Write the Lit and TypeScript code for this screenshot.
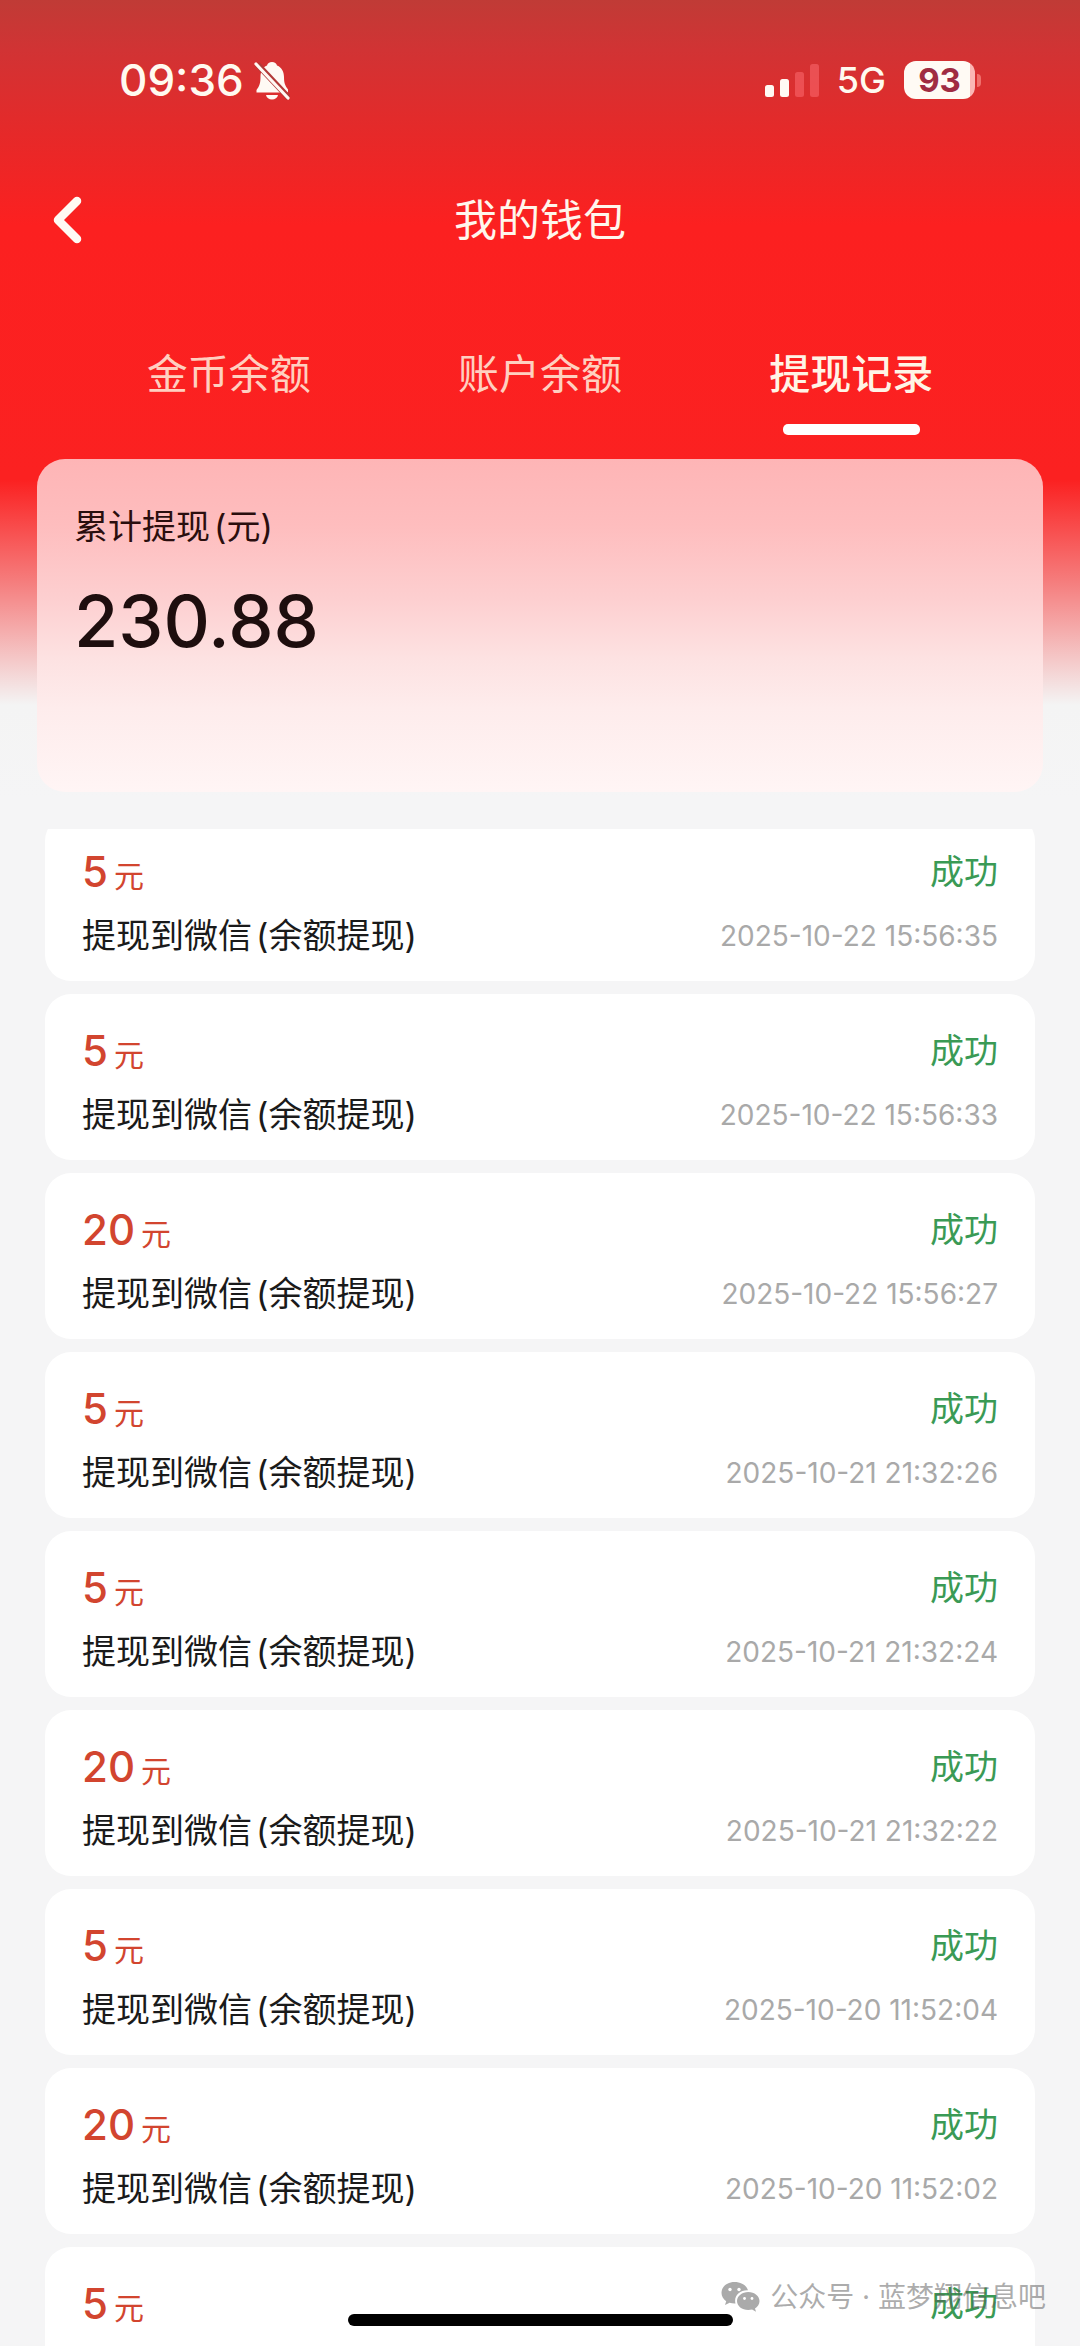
import { LitElement, html, css, svg, nothing } from "lit";
import { customElement, property, query, state } from "lit/decorators.js";
import { classMap } from "lit/directives/class-map.js";

interface Withdrawal {
  amount: number;
  time?: string;
}

const RECORDS: Withdrawal[] = [
  { amount: 5, time: "2025-10-22 15:56:35" },
  { amount: 5, time: "2025-10-22 15:56:33" },
  { amount: 20, time: "2025-10-22 15:56:27" },
  { amount: 5, time: "2025-10-21 21:32:26" },
  { amount: 5, time: "2025-10-21 21:32:24" },
  { amount: 20, time: "2025-10-21 21:32:22" },
  { amount: 5, time: "2025-10-20 11:52:04" },
  { amount: 20, time: "2025-10-20 11:52:02" },
  { amount: 5 },
];

const TABS = ["金币余额", "账户余额", "提现记录"];

@customElement("status-bar")
export class StatusBar extends LitElement {
  static styles = css`
    :host {
      display: flex;
      align-items: center;
      justify-content: space-between;
      height: 160px;
      padding: 0 99px 0 119px;
      color: #fffaf0;
    }
    .side {
      display: flex;
      align-items: center;
    }
    .clock {
      font-size: 44px;
      font-weight: 500;
      line-height: 52px;
    }
    .bell {
      margin-left: 10px;
      width: 36px;
      height: 40px;
    }
    .signal {
      width: 54px;
      height: 34px;
    }
    .network {
      margin: 0 18px;
      font-size: 36px;
      font-weight: 500;
      line-height: 44px;
    }
    .battery {
      display: flex;
      align-items: center;
      gap: 2px;
    }
    .cell {
      display: flex;
      align-items: center;
      justify-content: center;
      width: 71px;
      height: 38px;
      border-radius: 12px;
      background: linear-gradient(90deg, #fffaf4 93%, #fbb6b4 93%);
      color: #a02c42;
      font-size: 33px;
      font-weight: 700;
      line-height: 38px;
    }
    .nub {
      width: 4px;
      height: 13px;
      border-radius: 0 4px 4px 0;
      background: #f0706c;
    }
  `;

  render() {
    return html`
      <div class="side">
        <span class="clock">09:36</span>
        <svg class="bell" viewBox="0 0 36 40" aria-hidden="true">
          <path
            fill="#fffaf4"
            d="M18 2c2.600 0 4.500 1.400 5 3.500C28 7.500 30 12 30 17c0 6 1 8.500 4 12.500V32.500H2.500V30C5.500 26 6.500 23 6.500 17c0-5.500 2-9.500 6.500-11.500C13.500 3.400 15.400 2 18 2z"
          />
          <path fill="#fffaf4" d="M12 35h12c-.500 2.800-3 4.500-6 4.500S12.500 37.800 12 35z" />
          <path stroke="#b23a38" stroke-width="6" d="M3 4l32 34" />
          <path stroke="#fffaf4" stroke-width="3.200" stroke-linecap="round" d="M2 4l32 34" />
        </svg>
      </div>
      <div class="side">
        <svg class="signal" viewBox="0 0 54 34" aria-hidden="true">
          ${[12, 18, 25, 33].map(
            (h, i) => svg`<rect x=${i * 15} y=${34 - h} width="9" height=${h} rx="2.500"
              fill=${i < 2 ? "#fffaf4" : "#ff7076"} fill-opacity=${i < 2 ? 1 : 0.5} />`
          )}
        </svg>
        <span class="network">5G</span>
        <span class="battery"><span class="cell">93</span><span class="nub"></span></span>
      </div>
    `;
  }
}

@customElement("record-card")
export class RecordCard extends LitElement {
  @property({ attribute: false }) record!: Withdrawal;

  static styles = css`
    :host {
      display: grid;
      grid-template-columns: 1fr auto;
      align-content: start;
      row-gap: 16px;
      min-height: 112px;
      padding: 33px 37px 21px 37px;
      border-radius: 26px;
      background: #fff;
    }
    .amount,
    .status,
    .title,
    .time {
      line-height: 48px;
    }
    .amount {
      color: #d2452f;
      font-size: 42px;
      font-weight: 500;
    }
    .unit {
      margin-left: 6px;
      font-size: 30px;
      font-weight: 400;
      line-height: 30px;
    }
    .status {
      color: #3a9a55;
      font-size: 34px;
      text-align: right;
    }
    .title {
      color: #1a1a1a;
      font-size: 34px;
    }
    .note {
      margin-left: 4px;
    }
    .time {
      color: #a9a9a9;
      font-size: 28px;
      text-align: right;
    }
  `;

  render() {
    const { amount, time } = this.record;
    return html`
      <div class="amount">${amount}<span class="unit">元</span></div>
      <div class="status">成功</div>
      ${time
        ? html`<div class="title">提现到微信<span class="note">(余额提现)</span></div>
            <time class="time">${time}</time>`
        : nothing}
    `;
  }
}

@customElement("app-root")
export class AppRoot extends LitElement {
  @state() private active = 2;
  @query(".list") private list!: HTMLElement;

  static styles = css`
    :host {
      position: relative;
      display: flex;
      flex-direction: column;
      height: 100vh;
      overflow: hidden;
      font-family: Inter, "Noto Sans CJK SC", sans-serif;
      background: linear-gradient(
          #c03b36 0,
          #d13334 50px,
          #e62929 135px,
          #fc2020 225px,
          #fb2121 480px,
          #f58080 585px,
          #f4f4f4 705px,
          #f5f5f6 800px
        )
        #f5f5f6;
    }
    button {
      border: 0;
      padding: 0;
      background: none;
      color: inherit;
      font: inherit;
    }
    .nav {
      display: grid;
      grid-template-columns: 1fr auto 1fr;
      align-items: center;
      height: 120px;
      padding: 0 49px;
      color: #fff6ec;
    }
    .back {
      width: 36px;
      height: 52px;
    }
    .back svg {
      display: block;
      width: 36px;
      height: 52px;
    }
    .heading {
      margin: 0;
      font-size: 43px;
      font-weight: 400;
      line-height: 60px;
    }
    .tabs {
      display: grid;
      grid-template-columns: repeat(3, 1fr);
      padding: 70px 73px 24px;
    }
    .tab {
      display: flex;
      flex-direction: column;
      align-items: center;
      gap: 26px;
      color: #ffd0c0;
      font-size: 41px;
      line-height: 48px;
    }
    .tab::after {
      content: "";
      width: 137px;
      height: 11px;
      border-radius: 5px;
    }
    .tab.active {
      color: #fff4e6;
      font-weight: 500;
    }
    .tab.active::after {
      background: #fff;
    }
    .summary {
      margin: 0 37px;
      min-height: 249px;
      padding: 44px 37px 40px;
      border-radius: 28px;
      background: linear-gradient(
        #feb5b6,
        #febdbe 20%,
        #fdcfd0 42%,
        #fde2e2 60%,
        #feecec 75%,
        #fff5f5 100%
      );
      color: #2a0e0e;
    }
    .label {
      font-size: 34px;
      line-height: 48px;
    }
    .note {
      margin-left: 4px;
    }
    .total {
      margin-top: 26px;
      color: #1e0e0e;
      font-size: 72px;
      font-weight: 500;
      line-height: 88px;
    }
    .list {
      flex: 1;
      min-height: 0;
      margin: 37px 0 0;
      padding: 0 45px;
      display: flex;
      flex-direction: column;
      gap: 13px;
      overflow-y: auto;
      scrollbar-width: none;
      list-style: none;
    }
    .item {
      flex: none;
    }
    .watermark {
      position: absolute;
      right: 34px;
      bottom: 29px;
      display: flex;
      align-items: center;
      gap: 10px;
      color: rgba(90, 90, 90, 0.5);
      font-size: 28px;
      line-height: 40px;
    }
    .watermark svg {
      width: 39px;
      height: 32px;
    }
    .home {
      position: absolute;
      left: 50%;
      bottom: 20px;
      width: 385px;
      height: 12px;
      margin-left: -192px;
      border-radius: 6px;
      background: #000;
    }
  `;

  async firstUpdated() {
    const cards = this.renderRoot.querySelectorAll<RecordCard>("record-card");
    await Promise.all([...cards].map((card) => card.updateComplete));
    // The list opens slightly scrolled, its first card tucked under the summary.
    this.list.scrollTop = 14;
  }

  render() {
    return html`
      <status-bar></status-bar>
      <header class="nav">
        <button class="back" aria-label="返回">
          <svg viewBox="0 0 36 52" fill="none">
            <path
              stroke="#fffaf4"
              stroke-width="8.500"
              stroke-linecap="round"
              stroke-linejoin="round"
              d="M28 7L9 26l19 19"
            />
          </svg>
        </button>
        <h1 class="heading">我的钱包</h1>
      </header>
      <div class="tabs" role="tablist">
        ${TABS.map(
          (name, i) => html`<button
            class=${classMap({ tab: true, active: i === this.active })}
            role="tab"
            aria-selected=${i === this.active ? "true" : "false"}
            @click=${() => (this.active = i)}
          >${name}</button>`
        )}
      </div>
      <section class="summary">
        <div class="label">累计提现<span class="note">(元)</span></div>
        <div class="total">230.88</div>
      </section>
      <ul class="list">
        ${RECORDS.map(
          (r) => html`<li class="item"><record-card .record=${r}></record-card></li>`
        )}
      </ul>
      <div class="watermark">
        <svg viewBox="0 0 39 32" aria-hidden="true">
          <path
            fill="#aaa"
            d="M13.500 1C6 1 .500 5.800.500 11.800c0 3.400 1.800 6.400 4.700 8.400L4 24l4.600-2.300c1.600.500 3.200.700 4.900.700h1c-.300-1-.400-1.900-.400-2.900 0-5.800 5.400-10.300 12-10.300h.900C25.600 4.400 20.200 1 13.500 1z"
          />
          <path
            fill="#aaa"
            d="M38.500 20c0-4.900-5-9-11.200-9S16 15 16 20s5 9 11.300 9c1.300 0 2.600-.200 3.800-.500l3.900 2.200-1-3.300c2.800-1.700 4.500-4.400 4.500-7.400z"
          />
          <g fill="#fff">
            <circle cx="9" cy="8.500" r="1.700" />
            <circle cx="18" cy="8.500" r="1.700" />
            <circle cx="23.500" cy="17.500" r="1.400" />
            <circle cx="31" cy="17.500" r="1.400" />
          </g>
        </svg>
        <span>公众号 · 蓝梦翔信息吧</span>
      </div>
      <div class="home"></div>
    `;
  }
}
